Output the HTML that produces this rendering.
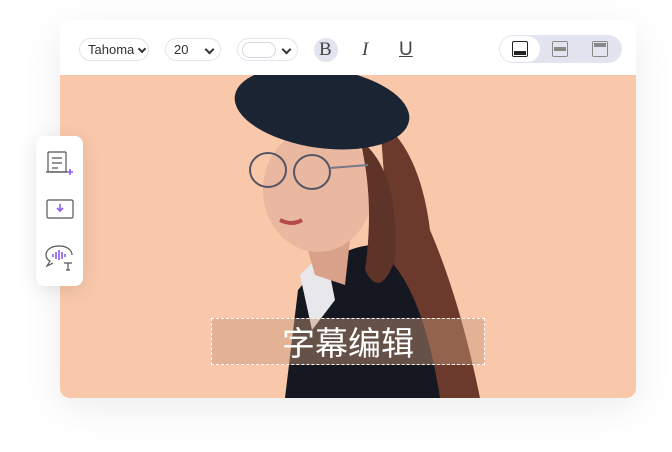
<!DOCTYPE html>
<html><head><meta charset="utf-8"><style>
body{margin:0;width:672px;height:452px;background:#fff;position:relative;overflow:hidden;font-family:"Liberation Sans","Noto Sans CJK SC",sans-serif}
.card{position:absolute;left:60px;top:20px;width:576px;height:378px;border-radius:10px;overflow:hidden;box-shadow:0 10px 40px rgba(0,0,0,.08);background:#fff}
.tb{position:absolute;left:0;top:0;width:576px;height:55px;background:#fff}
.pill{position:absolute;top:18px;height:23px;border:1px solid #e2e4ec;border-radius:12px;box-sizing:border-box;font-size:13px;color:#333;line-height:21px}
.chev{position:absolute;top:7px;width:5px;height:5px;border-right:2px solid #333;border-bottom:2px solid #333;transform:rotate(45deg)}
.img{position:absolute;left:0;top:55px;width:576px;height:323px;background:#f9c8ab}
.side{position:absolute;left:36px;top:136px;width:47px;height:150px;background:#fff;border-radius:8px;box-shadow:0 4px 20px rgba(0,0,0,.1)}
.sub{position:absolute;left:211px;top:318px;width:274px;height:47px;box-sizing:border-box;border:1px dashed #fff;background:rgba(200,150,120,.45);color:#fff;font-size:33px;text-align:center;line-height:44px;font-family:"Noto Sans CJK SC",sans-serif}
</style></head><body>
<div class="card">
<div class="tb">
<div class="pill" style="left:19px;width:70px;padding-left:8px">Tahoma<span class="chev" style="left:59px;width:4px;height:4px"></span></div>
<div class="pill" style="left:105px;width:56px;padding-left:8px">20<span class="chev" style="left:40px"></span></div>
<div class="pill" style="left:177px;width:61px"><span style="position:absolute;left:4px;top:3px;width:32px;height:14px;border:1px solid #d6d8e0;border-radius:8px"></span><span class="chev" style="left:45px"></span></div>
<div style="position:absolute;left:254px;top:18px;width:24px;height:24px;border-radius:50%;background:#e2e5ef"></div>
<div style="position:absolute;left:259px;top:19px;font-size:19px;color:#444;font-family:'Liberation Serif',serif">B</div>
<div style="position:absolute;left:302px;top:19px;font-size:19px;color:#444;font-style:italic;font-family:'Liberation Serif',serif">I</div>
<div style="position:absolute;left:339px;top:19px;font-size:19px;color:#444;text-decoration:underline">U</div>
<div style="position:absolute;left:439px;top:15px;width:123px;height:28px;border-radius:14px;background:#e2e5ef"></div>
<div style="position:absolute;left:440px;top:16px;width:40px;height:26px;border-radius:13px;background:#fff"></div>
<div style="position:absolute;left:452px;top:21px;width:14px;height:14px;border:1.5px solid #222;border-radius:2px"><div style="position:absolute;left:1px;right:1px;bottom:1px;height:4px;background:#222"></div></div>
<div style="position:absolute;left:492px;top:21px;width:14px;height:14px;border:1.5px solid #888;border-radius:2px"><div style="position:absolute;left:1px;right:1px;top:5px;height:4px;background:#888"></div></div>
<div style="position:absolute;left:532px;top:21px;width:14px;height:14px;border:1.5px solid #888;border-radius:2px"><div style="position:absolute;left:1px;right:1px;top:1px;height:4px;background:#888"></div></div>
</div>
<div class="img">
<svg width="576" height="323" viewBox="60 75 576 323" style="position:absolute;left:0;top:0">
<path d="M380 120 Q420 150 430 230 Q460 300 480 398 L400 398 Z" fill="#6b3a2c"/>
<path d="M285 398 L298 290 Q330 250 370 245 Q420 270 440 398 Z" fill="#151820"/>
<path d="M300 275 L325 250 L335 300 L312 330 Z" fill="#e8e8ec"/>
<path d="M305 240 L350 240 L345 285 L315 275 Z" fill="#d9a08a"/>
<ellipse cx="318" cy="190" rx="55" ry="62" fill="#eab7a0"/>
<path d="M360 140 Q400 170 395 260 Q380 300 365 270 Q375 200 360 140Z" fill="#5e3328"/>
<ellipse cx="322" cy="108" rx="88" ry="40" fill="#1a2433" transform="rotate(8 322 108)"/>
<ellipse cx="268" cy="170" rx="18" ry="17" fill="none" stroke="#556" stroke-width="2"/>
<ellipse cx="312" cy="172" rx="18" ry="17" fill="none" stroke="#556" stroke-width="2"/>
<path d="M330 168 L368 165" stroke="#778" stroke-width="2"/>
<path d="M280 220 Q292 226 302 220" stroke="#b5484a" stroke-width="4" fill="none"/>
</svg>
</div>
</div>
<div class="sub">字幕编辑</div>
<div class="side">
<svg width="47" height="150" viewBox="0 0 47 150" fill="none" stroke="#555" stroke-width="1.2">
<rect x="12" y="16" width="18" height="20" rx="1"/><path d="M10 36h22M16 22h10M16 27h10M16 32h6"/><path d="M31 36h6M34 33v6" stroke="#8b5cf6" stroke-width="1.6"/>
<rect x="11" y="64" width="26" height="18" rx="1.5"/><path d="M24 68v7M21 72l3 3 3-3" stroke="#8b5cf6" stroke-width="1.6"/>
<path d="M23 110c-8 0-13 4-13 9 0 3 2 5 4 6l-3 5 6-3" /><path d="M23 110c8 0 13 4 13 9"/><path d="M17 118v3M20 116v7M23 114v10M26 116v7M29 118v3" stroke="#8b5cf6" stroke-width="1.6"/><path d="M28 127h8M32 127v7M30 134h4"/>
</svg>
</div>
</body></html>
